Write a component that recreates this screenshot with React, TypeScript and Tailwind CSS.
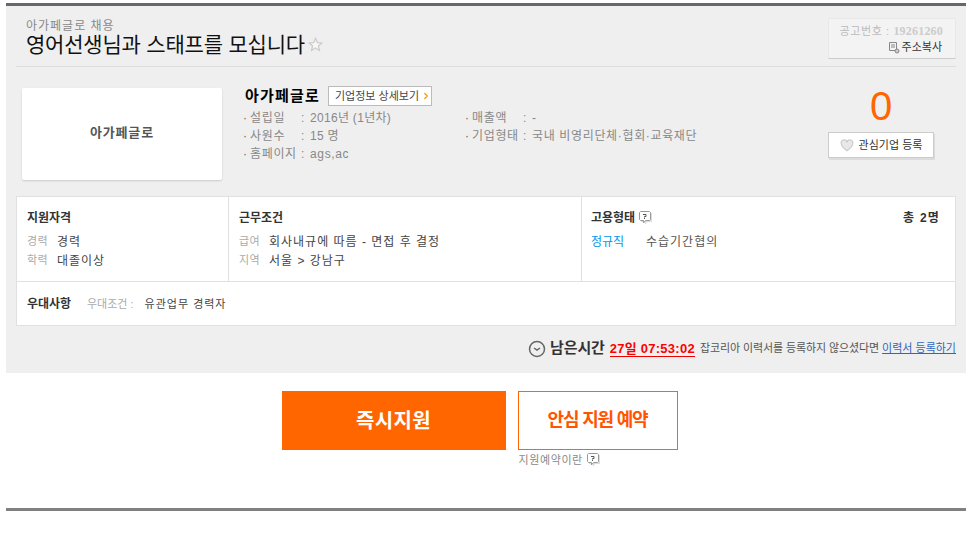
import { ChevronRight } from "lucide-react";

const font = "font-['Liberation_Sans','Noto_Sans_CJK_KR',sans-serif]";

const QuestionBubble = () => (
  <svg width="15" height="15" viewBox="0 0 15 15" className="shrink-0">
    <path d="M3 2h11v9H9l-2 3v-3H3z" fill="#ddd" />
    <path d="M2.500 .5h9l1 1v7l-1 1H7.500l-2 2.500V9.500h-3l-1-1v-7z" fill="#fff" stroke="#999" />
    <path d="M5 3.500h3v2H6.500v1" fill="none" stroke="#555" />
    <path d="M6.500 7v1" stroke="#555" />
  </svg>
);

const InfoLine = ({ label, value, tight }: { label: string; value: string; tight?: boolean }) => (
  <div className="flex h-[18px] items-center text-[12px] tracking-[0.65px] text-[#888]">
    <span className="w-[7px] text-[#666]">·</span>
    <span className="w-[51px] whitespace-nowrap">{label}</span>
    <span className="w-[9px] text-[#888]">:</span>
    <span className={tight ? "tracking-[0.3px]" : ""}>{value}</span>
  </div>
);

const Row = ({ label, value }: { label: string; value: string }) => (
  <div className="flex h-[19px] items-center text-[12px] tracking-[1px]">
    <span className="w-[30px] text-[11px] tracking-[0.3px] text-[#aaa]">{label}</span>
    <span className="text-[#444]">{value}</span>
  </div>
);

export default function App() {
  return (
    <div className={`${font} h-[536px] w-[973px] bg-white pt-[3px] px-[6px]`}>
      <div className="h-[370px] w-[960px] border-t-[3px] border-[#666670] bg-[#efefef] px-[10px]">
        {/* Header */}
        <div className="flex h-[61px] w-[940px] justify-between border-b border-[#ddd] pt-[12px]">
          <div className="pl-[10px] pt-[1px]">
            <p className="h-[13px] text-[12px] leading-[15px] tracking-[1px] text-[#888]">아가페글로 채용</p>
            <div className="flex items-center gap-[3px]">
              <h1 className="text-[21px] leading-[25px] tracking-[-0.2px] text-[#111]">영어선생님과 스태프를 모십니다</h1>
              <svg width="15" height="15" viewBox="0 0 24 24" fill="#f7f7f7" stroke="#ccc" strokeWidth="2">
                <path d="M12 2l3 7 7 .6-5.300 4.700 1.600 7.200L12 17.700 5.700 21.500l1.600-7.200L2 9.600 9 9z" />
              </svg>
            </div>
          </div>
          <div className="h-[41px] w-[128px] border border-[#e8e8e8] border-b-[#ccc] bg-[#f3f3f3] pr-[12px] pt-[5px] text-right">
            <p className="whitespace-nowrap text-[11px] leading-[15px] tracking-[0.6px] text-[#bbb]">
              공고번호 : <b className="font-['Liberation_Serif'] text-[12px] tracking-[0.2px] text-[#ccc]">19261260</b>
            </p>
            <div className="flex items-center justify-end gap-[2px] pr-[1px] text-[11px] leading-[16px] text-[#333]">
              <svg width="12" height="13" viewBox="0 0 12 13" fill="none" stroke="#888">
                <path d="M1.500 1.500h7v8h-7zM3 4h4M3 6h4" />
                <circle cx="9" cy="10" r="2" fill="#ccc" />
              </svg>
              주소복사
            </div>
          </div>
        </div>

        {/* Company */}
        <div className="flex h-[129px] pt-[21px]">
          <div className="ml-[6px] flex h-[92px] w-[200px] items-center justify-center rounded-[2px] bg-white pb-[2px] text-[13px] font-bold tracking-[0.8px] text-[#555] shadow-[0_1px_2px_rgba(0,0,0,0.15)]">
            아가페글로
          </div>
          <div className="ml-[21px] -mt-[2px] w-[585px]">
            <div className="flex h-[20px] items-center pl-[2px]">
              <span className="w-[83px] text-[15px] font-bold tracking-[1.200px] text-black">아가페글로</span>
              <span className="flex h-[20px] w-[104px] items-center border border-[#bbb] bg-white pl-[6px] text-[11px] text-[#444]">
                기업정보 상세보기
                <ChevronRight size={10} strokeWidth={3} className="ml-[2px] text-[#f90]" />
              </span>
            </div>
            <div className="mt-[3px] flex">
              <div className="w-[222px]">
                <InfoLine label="설립일" value="2016년 (1년차)" tight />
                <InfoLine label="사원수" value="15 명" tight />
                <InfoLine label="홈페이지" value="ags,ac" />
              </div>
              <div>
                <InfoLine label="매출액" value="-" />
                <InfoLine label="기업형태" value="국내 비영리단체·협회·교육재단" />
              </div>
            </div>
          </div>
          <div className="w-[106px]">
            <div className="-mt-[1px] h-[40px] text-center text-[40px] leading-[38px] text-[#ff6600]">0</div>
            <div className="mt-[5px] flex h-[26px] w-[106px] items-center justify-center gap-[5px] border border-[#ccc] bg-white text-[11px] text-[#333] shadow-[1px_2px_0_rgba(0,0,0,0.08)]">
              <svg width="14" height="13" viewBox="0 0 24 22" fill="#e8e8e8" stroke="#ccc" strokeWidth="2">
                <path d="M12 20C4 14 2 10 2 7a5 5 0 0 1 10-1 5 5 0 0 1 10 1c0 3-2 7-10 13z" />
              </svg>
              관심기업 등록
            </div>
          </div>
        </div>

        {/* Conditions table */}
        <div className="h-[130px] w-[940px] border border-[#e0e0e0] bg-white">
          <div className="flex h-[85px] border-b border-[#e0e0e0]">
            <div className="w-[212px] border-r border-[#e0e0e0] pl-[10px] pt-[13px]">
              <h2 className="mb-[6px] text-[12px] font-bold leading-[16px] text-[#333]">지원자격</h2>
              <Row label="경력" value="경력" />
              <Row label="학력" value="대졸이상" />
            </div>
            <div className="w-[353px] border-r border-[#e0e0e0] pl-[10px] pt-[13px]">
              <h2 className="mb-[6px] text-[12px] font-bold leading-[16px] text-[#333]">근무조건</h2>
              <Row label="급여" value="회사내규에 따름 - 면접 후 결정" />
              <Row label="지역" value="서울 > 강남구" />
            </div>
            <div className="flex-1 pl-[9px] pr-[15px] pt-[13px]">
              <div className="mb-[6px] flex h-[16px] items-center text-[12px] font-bold text-[#333]">
                <h2>고용형태</h2>
                <span className="ml-[3px]"><QuestionBubble /></span>
                <span className="ml-auto text-right tracking-[1.200px]">총 2명</span>
              </div>
              <div className="flex h-[19px] items-center text-[12px]">
                <span className="w-[55px] text-[#0099ee]">정규직</span>
                <span className="tracking-[1px] text-[#555]">수습기간협의</span>
              </div>
            </div>
          </div>
          <div className="flex h-[43px] items-center pl-[10px] pt-[1px] text-[12px]">
            <h2 className="w-[60px] font-bold text-[#333]">우대사항</h2>
            <span className="text-[11px] text-[#aaa]">우대조건 :</span>
            <span className="ml-[11px] text-[11px] tracking-[1px] text-[#444]">유관업무 경력자</span>
          </div>
        </div>

        {/* Deadline */}
        <div className="flex h-[44px] items-center justify-end pt-[1px]">
          <svg width="18" height="18" viewBox="0 0 18 18" fill="none" stroke="#666" strokeWidth="1.500">
            <circle cx="9" cy="9" r="7.500" />
            <path d="M6 8l3 2 3-2" />
          </svg>
          <b className="ml-[4px] text-[15px] tracking-[-0.1px] text-[#333]">남은시간</b>
          <b className="ml-[5px] border-b border-[#e00] text-[13px] leading-[15px] tracking-[0.25px] text-[#f00]">27일 07:53:02</b>
          <span className="ml-[5px] text-[11px] tracking-[-0.1px] text-[#555]">잡코리아 이력서를 등록하지 않으셨다면</span>
          <span className="ml-[3px] text-[11px] text-[#3366bb] underline">이력서 등록하기</span>
        </div>
      </div>

      {/* Apply buttons */}
      <div className="flex h-[135px] justify-center gap-[12px] pr-[14px] pt-[18px]">
        <div className="flex h-[59px] w-[224px] items-center justify-center bg-[#ff6600] text-[20px] font-bold tracking-[0.3px] text-white">
          즉시지원
        </div>
        <div>
          <div className="flex h-[59px] w-[160px] items-center justify-center border border-[#ff6600] bg-white text-[18px] font-bold tracking-[-1.200px] text-[#ff5500]">
            안심 지원 예약
          </div>
          <div className="mt-[2px] flex items-center gap-[3px] pl-[1px] text-[11px] tracking-[0.6px] text-[#888]">
            지원예약이란 <QuestionBubble />
          </div>
        </div>
      </div>
      <div className="h-[3px] w-[960px] bg-[#808080]" />
    </div>
  );
}
